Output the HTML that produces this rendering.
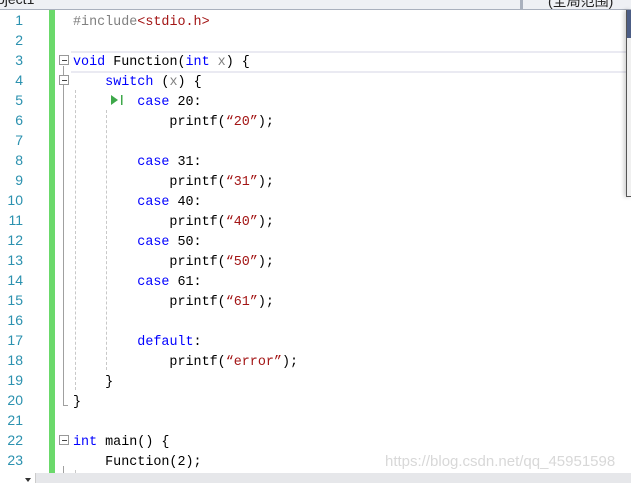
<!DOCTYPE html>
<html><head><meta charset="utf-8"><style>
body{margin:0;width:631px;height:483px;overflow:hidden;background:#fff;position:relative;font-family:"Liberation Mono","Noto Sans CJK SC",monospace;}
.top{position:absolute;left:0;top:0;width:631px;height:9px;background:#eef0f4;border-bottom:1px solid #a9b0bd;overflow:hidden}
.top span{position:absolute;top:-9px;font:14px "Liberation Sans","Noto Sans CJK SC",sans-serif;color:#222}
.ln{position:absolute;left:0;width:23px;text-align:right;color:#2b91af;font:14px "Liberation Sans",sans-serif;line-height:20px}
.code{position:absolute;left:73px;white-space:pre;font-size:13.4px;line-height:20px;color:#000}
.k{color:#0000ff}.s{color:#a31515}.g{color:#808080}.p{color:#808080}
.box{position:absolute;left:59px;width:8px;height:8px;border:1px solid #999;background:#fff}
.box:after{content:"";position:absolute;left:2px;top:4px;width:5px;height:1px;background:#444}
</style></head><body>
<div class="top"><span style="left:-3px">oject1</span><span style="left:548px">(全局范围)</span></div>
<div style="position:absolute;left:520px;top:0;width:3px;height:10px;background:#a9b0bd"></div>
<div style="position:absolute;left:49px;top:10px;width:6px;height:463px;background:#6bd96b"></div>
<div style="position:absolute;left:71px;top:51px;width:555px;height:18px;border-top:2px solid #eaeaf2;border-bottom:2px solid #eaeaf2"></div>
<div style="position:absolute;left:63px;top:66px;width:1px;height:340px;background:#a0a0a0"></div>
<div style="position:absolute;left:63px;top:405px;width:5px;height:1px;background:#a0a0a0"></div>
<div style="position:absolute;left:63px;top:466px;width:1px;height:8px;background:#a0a0a0"></div>
<div style="position:absolute;left:75px;top:90px;height:300px;border-left:1px dashed #c8c8c8"></div>
<div style="position:absolute;left:75px;top:470px;height:5px;border-left:1px dashed #c8c8c8"></div>
<div style="position:absolute;left:106px;top:110px;height:260px;border-left:1px dashed #c8c8c8"></div>
<div class="box" style="top:55px"></div>
<div class="box" style="top:75px"></div>
<div class="box" style="top:435px"></div>
<svg style="position:absolute;left:110px;top:95px" width="14" height="10"><path d="M1 0L8 5L1 10Z" fill="#3ea84a"/><rect x="11" y="0" width="1.5" height="10" fill="#3ea84a"/></svg>
<div class="ln" style="top:10px">1<br>2<br>3<br>4<br>5<br>6<br>7<br>8<br>9<br>10<br>11<br>12<br>13<br>14<br>15<br>16<br>17<br>18<br>19<br>20<br>21<br>22<br>23</div>
<div class="code" style="top:13px"><span class="g">#include</span><span class="s">&lt;stdio.h&gt;</span>

<span class="k">void</span> Function(<span class="k">int</span> <span class="p">x</span>) {
    <span class="k">switch</span> (<span class="p">x</span>) {
        <span class="k">case</span> 20:
            printf(<span class="s">“20”</span>);

        <span class="k">case</span> 31:
            printf(<span class="s">“31”</span>);
        <span class="k">case</span> 40:
            printf(<span class="s">“40”</span>);
        <span class="k">case</span> 50:
            printf(<span class="s">“50”</span>);
        <span class="k">case</span> 61:
            printf(<span class="s">“61”</span>);

        <span class="k">default</span>:
            printf(<span class="s">“error”</span>);
    }
}

<span class="k">int</span> main() {
    Function(2);</div>
<div style="position:absolute;left:385px;top:453px;font:15px 'Liberation Sans',sans-serif;color:#d8d8d8">https://blog.csdn.net/qq_45951598</div>
<div style="position:absolute;left:626px;top:10px;width:5px;height:186px;background:#f0f0f0;border-left:1px solid #555;border-bottom:1px solid #555;box-shadow:-2px 0 4px rgba(0,0,0,.2)"></div>
<div style="position:absolute;left:627px;top:10px;width:4px;height:28px;background:#4c5d85"></div>
<div style="position:absolute;left:0;top:473px;width:631px;height:10px;background:#e6e7ea"></div>
<div style="position:absolute;left:0;top:473px;width:35px;height:10px;background:#fff;border-right:1px solid #ccc"></div>
<div style="position:absolute;left:25px;top:478px;border:3px solid transparent;border-top:4px solid #333"></div>
</body></html>
